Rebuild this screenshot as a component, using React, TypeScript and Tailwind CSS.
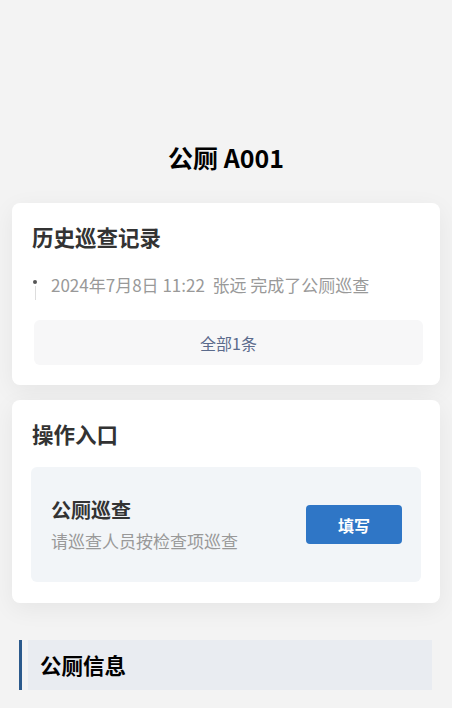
import React from "react";

const FONT = '"Noto Sans CJK SC", "Noto Sans", sans-serif';

// ─── 卡片 ─────────────────────────────────────────────

function Card({ title, children }: { title: string; children: React.ReactNode }) {
  return (
    <div className="mx-3 rounded-lg bg-white pt-5 pb-5 shadow-[0_6px_24px_rgba(0,0,0,0.06)]">
      <h2 className="px-5 text-[21.5px] leading-[28px] font-bold text-[#333]">{title}</h2>
      {children}
    </div>
  );
}

export default function App() {
  return (
    <div className="min-h-[708px] bg-[#f3f3f3] pt-[142px]" style={{ fontFamily: FONT }}>
      <h1 className="text-center text-[25px] leading-[30px] font-bold text-black">公厕 A001</h1>

      <div className="mt-[31px]">
        <Card title="历史巡查记录">
          {/* 时间线 */}
          <div className="mt-[22px] flex pl-[21px]">
            <div className="flex w-[4px] flex-col items-center pt-[7px]">
              <span className="h-[4px] w-[4px] rounded-full bg-[#555]" />
              <span className="mt-[2px] h-[14px] w-px bg-[#ddd]" />
            </div>
            <p className="ml-[14px] text-[17px] leading-[24px] text-[#999]">
              2024年7月8日 11:22&nbsp; 张远 完成了公厕巡查
            </p>
          </div>
          <button className="mt-[20px] ml-[22px] mr-[17px] flex h-[45px] w-[389px] items-center justify-center rounded-md bg-[#f7f7f8] text-[16px] text-[#5b6b8c]">
            全部1条
          </button>
        </Card>
      </div>

      <div className="mt-[15px]">
        <Card title="操作入口">
          <div className="mx-[19px] mt-[19px] mb-[1px] flex h-[115px] items-center justify-between rounded-md bg-[#f2f5f8] pl-5 pr-[19px]">
            <div>
              <p className="text-[20px] leading-[26px] font-bold text-[#333]">公厕巡查</p>
              <p className="mt-[7px] text-[17px] leading-[22px] text-[#999]">请巡查人员按检查项巡查</p>
            </div>
            <button className="h-[39px] w-[96px] rounded-[4px] bg-[#2f76c6] text-[16px] font-bold text-white">
              填写
            </button>
          </div>
        </Card>
      </div>

      {/* 公厕信息 */}
      <div className="mt-[37px] flex pl-[19px] pr-5">
        <span className="w-[3px] bg-[#2c5a8c]" />
        <div className="ml-[6px] flex h-[50px] flex-1 items-center bg-[#e9ecf1] pl-3">
          <h3 className="text-[21.5px] font-bold text-black">公厕信息</h3>
        </div>
      </div>
    </div>
  );
}
